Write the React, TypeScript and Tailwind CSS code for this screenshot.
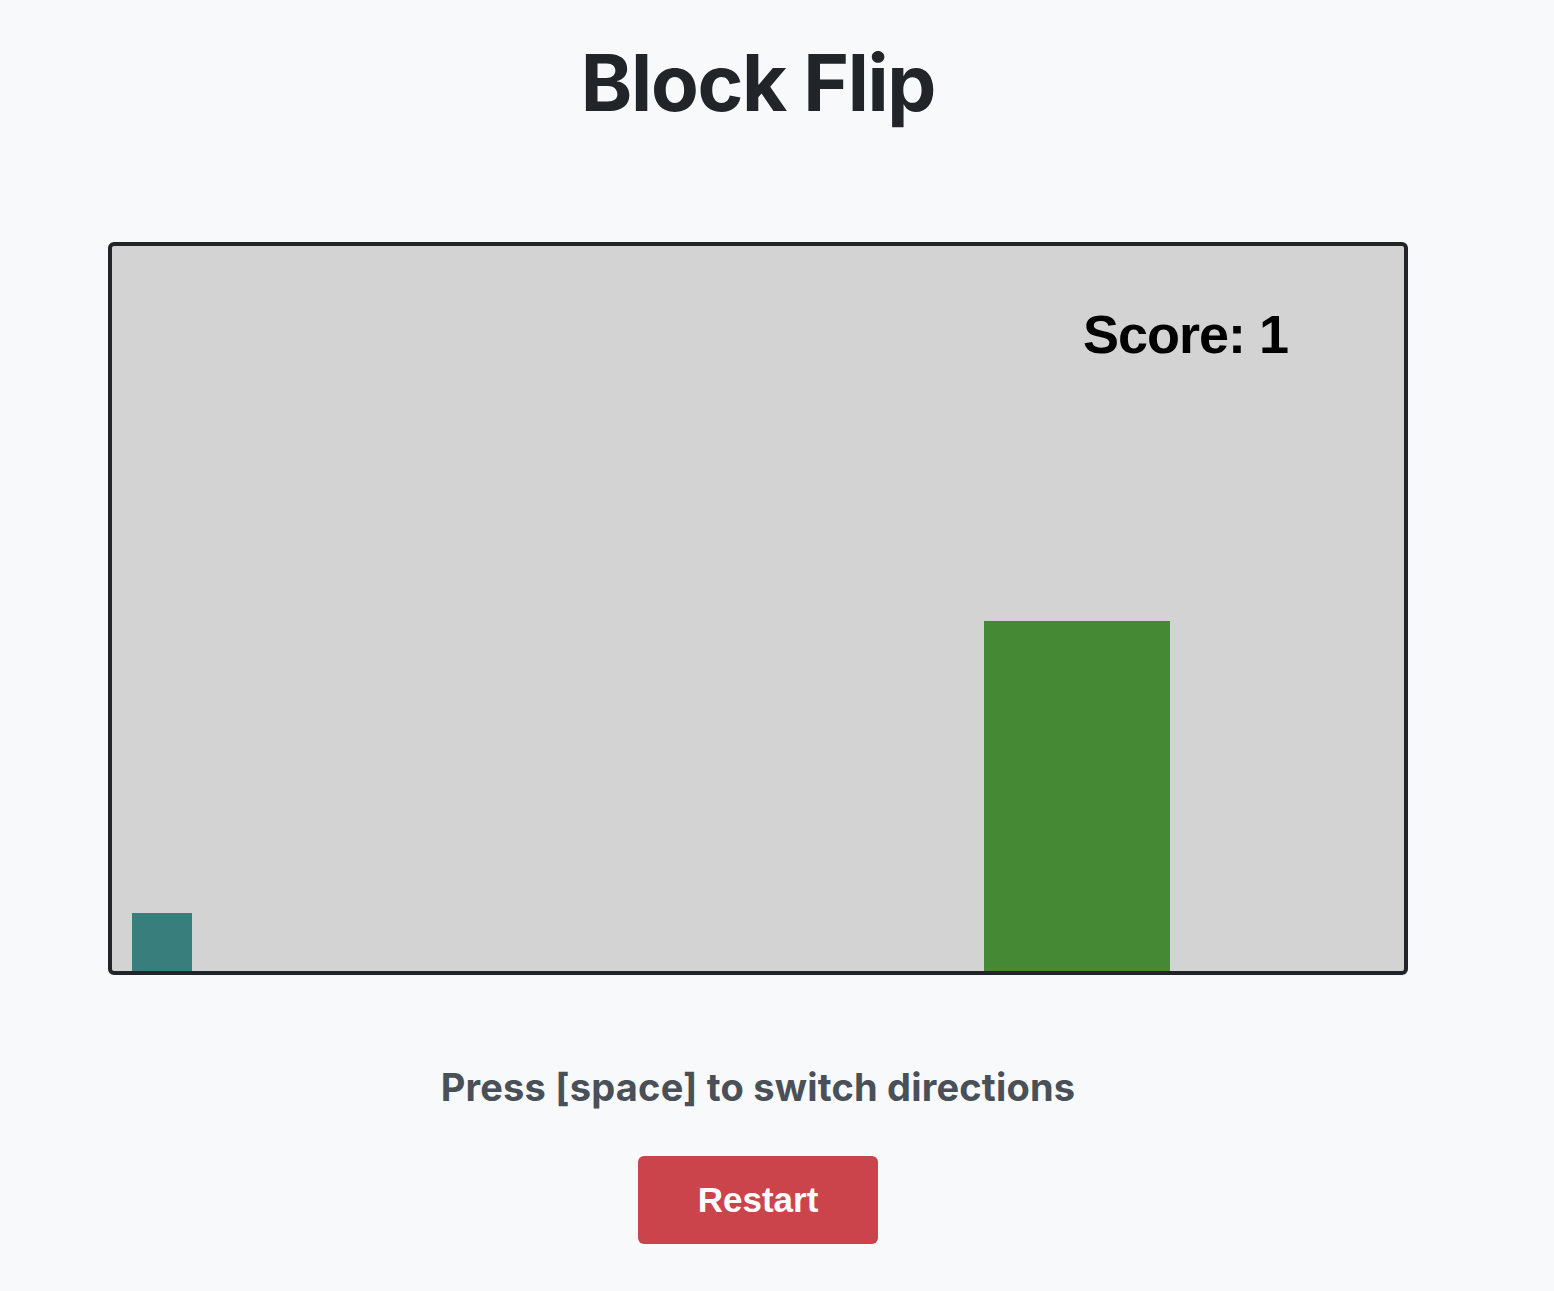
export default function App() {
  return (
    <div className="min-h-[1291px] bg-[#f8f9fa]">
      <div className="w-[1516px] flex flex-col items-center">
        <h1 className="mt-[44px] text-[78px] leading-none font-bold tracking-[-1.3px] text-[#212529] font-['Inter',sans-serif]">
          Block Flip
        </h1>

        <div className="mt-[120px] w-[1300px] h-[733px] border-4 border-[#212529] rounded-md bg-[#d3d3d3] relative overflow-hidden">
          <div className="absolute left-[971px] top-[61px] text-[54px] leading-none font-bold tracking-[-1px] text-black font-['Liberation_Sans',Arial,sans-serif]">
            Score: 1
          </div>
          <div className="absolute left-[20px] bottom-0 w-[60px] h-[58px] bg-[#377e7c]" />
          <div className="absolute left-[872px] bottom-0 w-[186px] h-[350px] bg-[#468934]" />
        </div>

        <p className="mt-[93px] text-[38px] leading-none font-bold tracking-[0.2px] text-[#495057] font-['Inter',sans-serif]">
          Press [space] to switch directions
        </p>

        <button className="mt-[50px] w-[240px] h-[88px] rounded-md bg-[#cc444b] text-white text-[35px] font-bold font-['Liberation_Sans',Arial,sans-serif]">
          Restart
        </button>
      </div>
    </div>
  )
}
